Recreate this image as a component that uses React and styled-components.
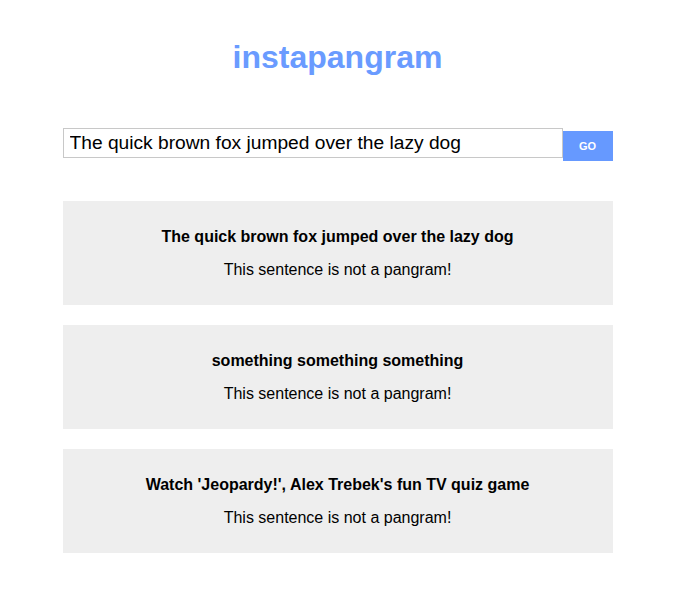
import React, { useState } from "react";
import styled, { createGlobalStyle } from "styled-components";

const GlobalStyle = createGlobalStyle`
  body {
    margin: 0;
    background: #ffffff;
    font-family: "Liberation Sans", Arial, sans-serif;
    color: #000;
  }
`;

const Page = styled.div`
  width: 550px;
  margin: 0 auto;
  padding-left: 1px;
`;

const Title = styled.h1`
  margin: 39px 0 0;
  font-size: 32px;
  line-height: 36px;
  font-weight: 700;
  text-align: center;
  color: #6a9bff;
`;

const SearchForm = styled.form`
  display: flex;
  align-items: flex-start;
  margin-top: 53px;
`;

const SearchInput = styled.input`
  box-sizing: border-box;
  width: 500px;
  height: 30px;
  margin: 0;
  padding: 0 6px;
  border: 1px solid #c8c8c8;
  border-radius: 0;
  outline: none;
  font-family: "Liberation Sans", Arial, sans-serif;
  font-size: 19.2px;
  color: #000;
`;

const GoButton = styled.button`
  width: 50px;
  height: 30px;
  margin-top: 3px;
  border: none;
  border-radius: 0;
  background: #6699ff;
  color: #ffffff;
  font-family: "Liberation Sans", Arial, sans-serif;
  font-size: 11px;
  font-weight: 700;
  cursor: pointer;
`;

const ResultList = styled.div`
  display: flex;
  flex-direction: column;
  gap: 20px;
  margin-top: 40px;
`;

const ResultCard = styled.div`
  background: #eeeeee;
  padding: 26px 20px 25px;
  text-align: center;
`;

const Sentence = styled.div`
  font-size: 16px;
  line-height: 20px;
  font-weight: 700;
`;

const Verdict = styled.div`
  margin-top: 13px;
  font-size: 16px;
  line-height: 20px;
`;

const results = [
  "The quick brown fox jumped over the lazy dog",
  "something something something",
  "Watch 'Jeopardy!', Alex Trebek's fun TV quiz game"
];

const App = () => {
  const [text, setText] = useState("The quick brown fox jumped over the lazy dog");
  return (
    <Page>
      <GlobalStyle />
      <Title>instapangram</Title>
      <SearchForm onSubmit={e => e.preventDefault()}>
        <SearchInput value={text} onChange={e => setText(e.target.value)} />
        <GoButton type="submit">GO</GoButton>
      </SearchForm>
      <ResultList>
        {results.map(r => (
          <ResultCard key={r}>
            <Sentence>{r}</Sentence>
            <Verdict>This sentence is not a pangram!</Verdict>
          </ResultCard>
        ))}
      </ResultList>
    </Page>
  );
};

export default App;
